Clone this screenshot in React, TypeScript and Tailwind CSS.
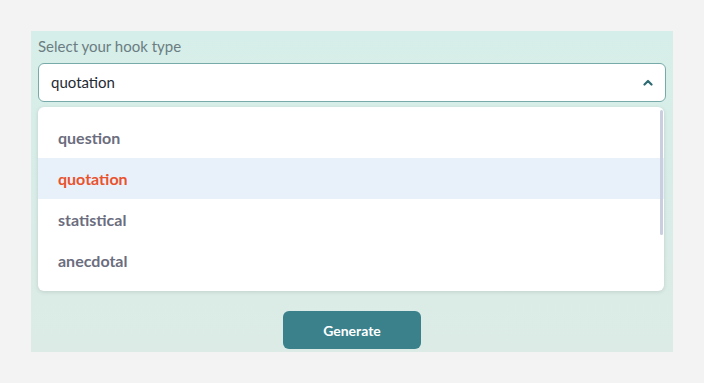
const options = ["question", "quotation", "statistical", "anecdotal"];

export default function App() {
  const selected = "quotation";
  return (
    <div className="w-[704px] h-[383px] bg-[#f3f3f3] pt-[31px] pl-[31px]" style={{ fontFamily: "Lato, 'Noto Sans', sans-serif" }}>
      <div className="w-[642px] h-[321px] bg-gradient-to-b from-[#d6eee9] to-[#dcebe6] px-[7px] pt-[5px] flex flex-col">
        <div className="shrink-0 text-[15px] leading-[20px] text-[#6b7d82] mb-[7px]">
          Select your hook type
        </div>
        <div className="shrink-0 h-[39px] bg-white border border-[#78aaa9] rounded-[6px] flex items-center justify-between pl-[12px] pr-[12px]">
          <span className="text-[15px] text-[#1f2a33]">{selected}</span>
          <svg width="10" height="7" viewBox="0 0 10 7" fill="none">
            <path d="M1.5 5.5 L5 2 L8.5 5.5" stroke="#2f6b73" strokeWidth="2.2" strokeLinecap="round" strokeLinejoin="round" />
          </svg>
        </div>
        <div className="shrink-0 relative mt-[5px] w-[626px] h-[184px] bg-white rounded-[6px] shadow-[0_1px_4px_rgba(0,0,0,0.12)] py-[10px]">
          {options.map((o) => (
            <div
              key={o}
              className={`h-[41px] flex items-center pl-[20px] text-[16px] font-bold ${
                o === selected ? "bg-[#e8f0fa] text-[#e9522d]" : "text-[#6b6d7e]"
              }`}
            >
              {o}
            </div>
          ))}
          <div className="absolute right-[1px] top-[3px] w-[3px] h-[125px] bg-[#c9cfdf] rounded-full" />
        </div>
        <div className="shrink-0 flex justify-center mt-[20px]">
          <button className="w-[138px] h-[38px] bg-[#3a818c] rounded-[6px] text-white text-[14px] font-bold">
            Generate
          </button>
        </div>
      </div>
    </div>
  );
}
